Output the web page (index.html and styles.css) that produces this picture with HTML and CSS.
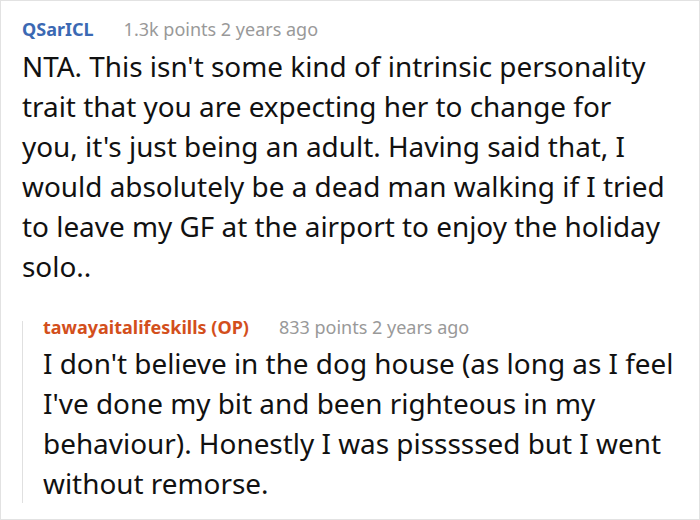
FILE: index.html
```html
<!DOCTYPE html>
<html>
<head>
<meta charset="utf-8">
<link rel="stylesheet" href="styles.css">
</head>
<body>
<div class="frame">
  <div class="comment">
    <div class="meta">
      <span class="author">QSarICL</span>
      <span class="info">1.3k points 2 years ago</span>
    </div>
    <p class="text">NTA. This isn't some kind of intrinsic personality<br>trait that you are expecting her to change for<br>you, it's just being an adult. Having said that, I<br>would absolutely be a dead man walking if I tried<br>to leave my GF at the airport to enjoy the holiday<br>solo..</p>
    <div class="reply">
      <div class="meta">
        <span class="author op">tawayaitalifeskills (OP)</span>
        <span class="info">833 points 2 years ago</span>
      </div>
      <p class="text">I don't believe in the dog house (as long as I feel<br>I've done my bit and been righteous in my<br>behaviour). Honestly I was pisssssed but I went<br>without remorse.</p>
    </div>
  </div>
</div>
</body>
</html>
```

FILE: styles.css
```css
html, body {
  margin: 0;
  padding: 0;
  background: #fff;
}
.frame {
  width: 700px;
  height: 520px;
  box-sizing: border-box;
  border: 1px solid #e2e2e2;
  overflow: hidden;
  font-family: "Noto Sans", sans-serif;
}
.comment {
  padding: 18px 0 0 21px;
}
.meta {
  display: flex;
  gap: 30px;
  font-size: 18px;
  line-height: 20px;
}
.author {
  font-weight: bold;
  color: #3b69b3;
}
.author.op {
  color: #d34f1c;
}
.info {
  color: #999;
}
.text {
  margin: 7px 0 0 0;
  font-size: 27.9px;
  line-height: 40px;
  color: #111;
  white-space: nowrap;
}
.reply {
  margin-top: 35px;
  border-left: 1px solid #e0e0e0;
  padding-left: 20px;
}
.reply .meta {
  line-height: 12px;
}
.reply .text {
  margin-top: 10px;
}
```
